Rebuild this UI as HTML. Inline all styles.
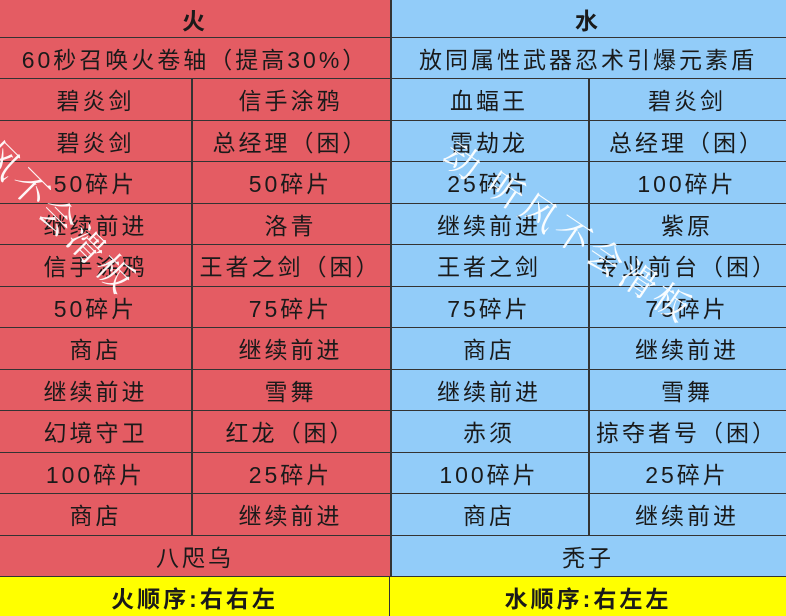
<!DOCTYPE html>
<html><head><meta charset="utf-8"><style>
body{margin:0;width:786px;height:616px;overflow:hidden;position:relative;font-family:"Liberation Sans","Noto Sans CJK SC",sans-serif;color:#1a1a1a}
.c{position:absolute;box-sizing:border-box;display:flex;align-items:center;justify-content:center;font-size:23px;letter-spacing:3px;border-bottom:1.5px solid #333}
.r{background:#e45c63}.b{background:#92ccf9}.y{background:#ffff00;font-weight:bold;border:none}
.vl{position:absolute;width:1.5px;background:#333}
.wm{position:absolute;color:rgba(255,255,255,0.95);font-size:36px;font-family:"Noto Serif CJK SC",serif;letter-spacing:4px;white-space:nowrap}
</style></head><body>
<div class="c r" style="left:0;top:0;width:390px;height:38px;font-weight:bold">火</div>
<div class="c b" style="left:390px;top:0;width:396px;height:38px;font-weight:bold">水</div>
<div class="c r" style="left:0;top:38px;width:390px;height:41px">60秒召唤火卷轴（提高30%）</div>
<div class="c b" style="left:390px;top:38px;width:396px;height:41px">放同属性武器忍术引爆元素盾</div>
<div id="rows"></div>
<div class="c r" style="left:0;top:536px;width:390px;height:41px">八咫乌</div>
<div class="c b" style="left:390px;top:536px;width:396px;height:41px">秃子</div>
<div class="c y" style="left:0;top:577px;width:390px;height:39px;border-right:1.5px solid #333">火顺序:右右左</div>
<div class="c y" style="left:390px;top:577px;width:396px;height:39px">水顺序:右左左</div>
<div class="vl" style="left:390px;top:0;height:577px"></div>
<div class="vl" style="left:191px;top:79px;height:457px"></div>
<div class="vl" style="left:588px;top:79px;height:457px"></div>
<div class="wm" style="left:8px;top:128px;transform:rotate(45deg);transform-origin:left top">风不会滑板</div>
<div class="wm" style="left:462px;top:128px;transform:rotate(34deg);transform-origin:left top">动 听风不会滑板</div>
<script>
var d=[["碧炎剑","信手涂鸦","血蝠王","碧炎剑"],["碧炎剑","总经理（困）","雷劫龙","总经理（困）"],["50碎片","50碎片","25碎片","100碎片"],["继续前进","洛青","继续前进","紫原"],["信手涂鸦","王者之剑（困）","王者之剑","专业前台（困）"],["50碎片","75碎片","75碎片","75碎片"],["商店","继续前进","商店","继续前进"],["继续前进","雪舞","继续前进","雪舞"],["幻境守卫","红龙（困）","赤须","掠夺者号（困）"],["100碎片","25碎片","100碎片","25碎片"],["商店","继续前进","商店","继续前进"]];
var L=[[0,191,"r"],[191,199,"r"],[390,198,"b"],[588,198,"b"]],h="";
d.forEach(function(row,i){var t=79+i*41.5;row.forEach(function(s,j){h+='<div class="c '+L[j][2]+'" style="left:'+L[j][0]+'px;top:'+t+'px;width:'+L[j][1]+'px;height:41.5px">'+s+'</div>';});});
document.getElementById("rows").outerHTML=h;
</script>
</body></html>
